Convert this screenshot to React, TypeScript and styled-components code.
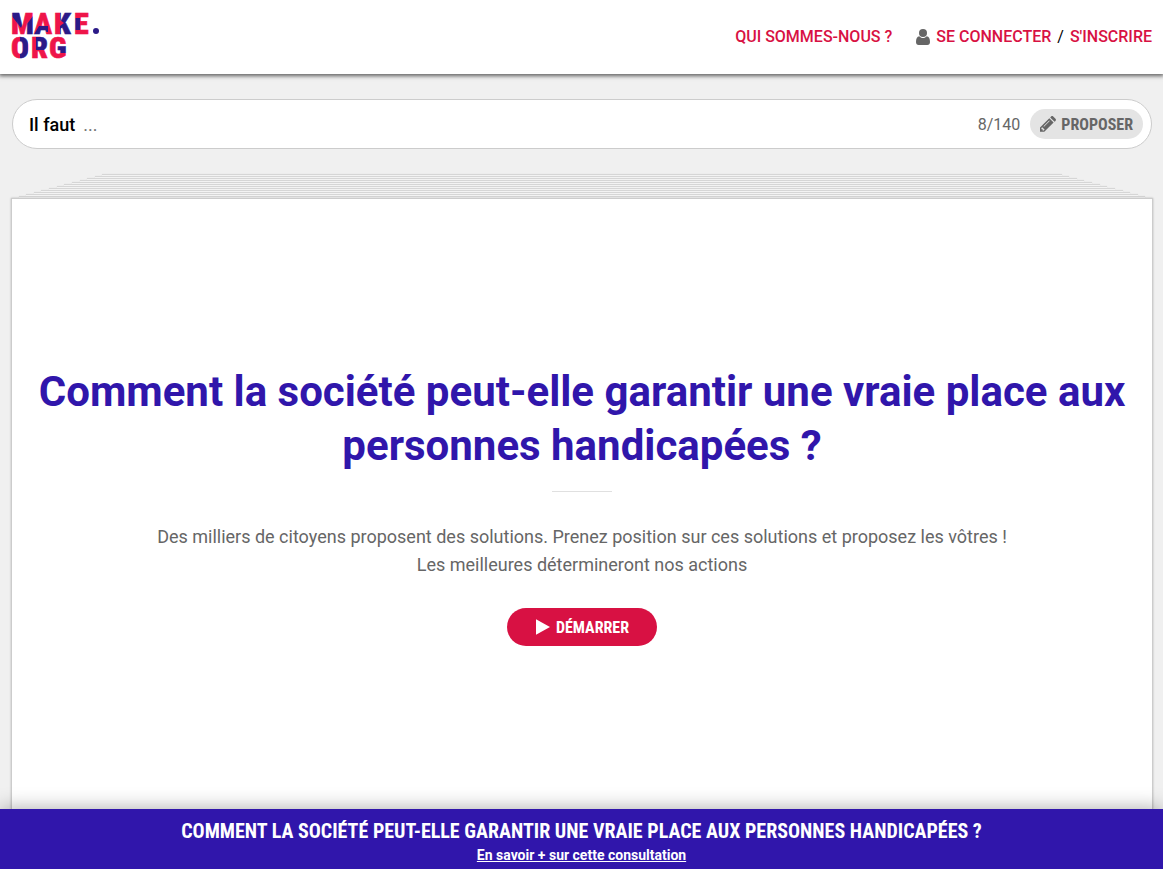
import React from "react";
import styled, { createGlobalStyle } from "styled-components";

const red = "#d81143";
const blue = "#3016ab";
const condensed = `"Roboto Condensed", Roboto, "Liberation Sans", sans-serif`;

const GlobalStyle = createGlobalStyle`
  *, *::before, *::after { box-sizing: border-box; }
  body {
    margin: 0;
    background: #f0f0f0;
    color: #000;
    font-family: Roboto, "Liberation Sans", sans-serif;
    font-size: 16px;
  }
`;

const Page = styled.div`
  display: flex;
  flex-direction: column;
  min-height: 100vh;
`;

const Header = styled.header`
  position: relative;
  display: flex;
  justify-content: space-between;
  align-items: center;
  padding: 12px 11px;
  background: #fff;
  box-shadow: 0 1px 4px 1px rgba(0, 0, 0, 0.6);
`;

const LogoLink = styled.a`
  display: block;
  height: 50px;
`;

const Nav = styled.nav`
  display: flex;
  align-items: center;
  gap: 24px;
  line-height: 24px;
`;

const NavLink = styled.a`
  color: ${red};
  font-weight: 500;
  text-decoration: none;
  text-transform: uppercase;
`;

const Account = styled.div`
  display: flex;
  align-items: center;
  gap: 6px;
`;

const Main = styled.main`
  flex: 1;
  display: flex;
  flex-direction: column;
  padding: 25px 10px 0 11px;
`;

const ProposalForm = styled.form`
  display: flex;
  align-items: center;
  height: 50px;
  margin: 0 1px 25px;
  padding: 0 8px 0 16px;
  border: 1px solid #ccc;
  border-radius: 25px;
  background: #fff;
`;

const ProposalLabel = styled.label`
  font-size: 18px;
  font-weight: 500;
`;

const ProposalInput = styled.input`
  flex: 1;
  min-width: 0;
  padding: 0 8px;
  border: 0;
  outline: 0;
  background: transparent;
  font-family: inherit;
  font-size: 18px;
  &::placeholder { color: #757575; opacity: 1; }
`;

const Counter = styled.span`
  margin-right: 10px;
  color: #666;
`;

const Button = styled.button<{ $primary?: boolean }>`
  display: flex;
  align-items: center;
  justify-content: center;
  gap: ${(p) => (p.$primary ? 6 : 4)}px;
  height: ${(p) => (p.$primary ? 38 : 30)}px;
  padding: 0 ${(p) => (p.$primary ? 28 : 10)}px;
  border: 0;
  border-radius: 19px;
  background: ${(p) => (p.$primary ? red : "#e4e4e4")};
  color: ${(p) => (p.$primary ? "#fff" : "#666")};
  font-family: ${condensed};
  font-size: 16px;
  font-weight: 700;
  text-transform: uppercase;
`;

const Pile = styled.div`
  display: flex;
  flex-direction: column;
  align-items: center;
`;

const Sheet = styled.div<{ $depth: number }>`
  width: calc(100% - ${(p) => p.$depth} * 4% / 3);
  height: 2px;
  border-top: 1px solid #d6d6d6;
  background: #f6f6f6;
  box-shadow: 0 0 1px rgba(0, 0, 0, 0.15);
`;

const Card = styled.section`
  flex: 1;
  display: flex;
  flex-direction: column;
  align-items: center;
  justify-content: center;
  padding: 27px 24px 24px;
  border: 1px solid #ccc;
  border-bottom: 0;
  background: #fff;
  box-shadow: 0 0 2px rgba(0, 0, 0, 0.25);
  text-align: center;
`;

const Title = styled.h1`
  margin: 0;
  color: ${blue};
  font-size: 42px;
  line-height: 54px;
  font-weight: 700;
`;

const Rule = styled.hr`
  width: 60px;
  height: 1px;
  margin: 18px 0 31px;
  border: 0;
  background: #e0e0e0;
`;

const Intro = styled.p`
  margin: 0 0 29px;
  color: #666;
  font-size: 18px;
  line-height: 28px;
`;

const Line = styled.span`
  display: block;
`;

const Banner = styled.footer`
  position: relative;
  display: flex;
  flex-direction: column;
  align-items: center;
  padding: 9px 12px 3px;
  background: ${blue};
  color: #fff;
  text-align: center;
  box-shadow: 0 0 20px rgba(0, 0, 0, 0.35);
`;

const BannerTitle = styled.h2`
  margin: 0;
  font-family: ${condensed};
  font-size: 20px;
  line-height: 26px;
  font-weight: 700;
  text-transform: uppercase;
`;

const BannerLink = styled.a`
  color: #fff;
  font-size: 14px;
  line-height: 22px;
  font-weight: 700;
`;

const LogoSvg = styled.svg`
  display: block;
  overflow: visible;
`;

const LogoText = styled.text`
  font-family: ${condensed};
  font-size: 30px;
  font-weight: 900;
  stroke-width: 0.5px;
`;

const Logo = () => (
  <LogoSvg width="90" height="50" viewBox="0 0 90 50" role="img" aria-label="Make.org">
    <defs>
      <pattern id="facets" patternUnits="userSpaceOnUse" width="90" height="50">
        <rect width="90" height="50" fill="#ee1549" />
        <g fill="#2b1a87">
          <path d="M0 0H8L12 11L10 16L0 3ZM22 4V24H16V12Z" />
          <path d="M28 14H37V20H30L29 24H22ZM49 14L53 11L49 8V0H62V24H49Z" />
          <path d="M63 6H69V18H63ZM9 25H17V49H9ZM25 25H37V38H25ZM46 34H58V41H46Z" />
        </g>
      </pattern>
    </defs>
    <g fill="url(#facets)" stroke="url(#facets)">
      <LogoText x="0 23 43 63" y="22">MAKE</LogoText>
      <LogoText x="0 20 38" y="46">ORG</LogoText>
    </g>
    <circle cx="85" cy="19" r="3" fill="#2b1a87" />
  </LogoSvg>
);

const UserIcon = () => (
  <svg width="14" height="16" viewBox="0 0 14 16" fill="#666" aria-hidden="true">
    <circle cx="7" cy="4" r="4" />
    <path d="M3.3 7.2C1 7.5 0 9.7 0 13c0 1.900 1 3 2.700 3h8.600c1.700 0 2.700-1.100 2.700-3 0-3.300-1-5.500-3.300-5.800C9.700 8.300 8.500 9 7 9s-2.700-.7-3.700-1.800Z" />
  </svg>
);

const PencilIcon = () => (
  <svg width="17" height="16" viewBox="0 0 17 16" fill="#666" aria-hidden="true">
    <path
      fillRule="evenodd"
      d="M0 11.500 9.300 2.200l4.300 4.300L4.300 15.800H0ZM1.400 12v1.200h1.200v1.200h1.200l.8-.8L2.200 11.200ZM3.500 10.200l.5.500 5.700-5.700-.5-.5Z"
    />
    <path d="m10.200 1.400.9-.9c.6-.6 1.500-.6 2.100 0l2.300 2.300c.6.6.6 1.500 0 2.100l-.9.9Z" />
  </svg>
);

const PlayIcon = () => (
  <svg width="15" height="16" viewBox="0 0 15 16" fill="#fff" aria-hidden="true">
    <path d="M1 .2v15.600L15 8Z" />
  </svg>
);

const sheets = [12, 11, 10, 9, 8, 7, 6, 5, 4, 3, 2, 1];

export default function App() {
  return (
    <>
      <GlobalStyle />
      <Page>
        <Header>
          <LogoLink href="#">
            <Logo />
          </LogoLink>
          <Nav>
            <NavLink href="#about">Qui sommes-nous ?</NavLink>
            <Account>
              <UserIcon />
              <NavLink href="#login">Se connecter</NavLink>
              <span>/</span>
              <NavLink href="#register">S'inscrire</NavLink>
            </Account>
          </Nav>
        </Header>
        <Main>
          <ProposalForm onSubmit={(e) => e.preventDefault()}>
            <ProposalLabel htmlFor="proposal">Il faut</ProposalLabel>
            <ProposalInput id="proposal" type="text" placeholder="..." />
            <Counter>8/140</Counter>
            <Button type="submit">
              <PencilIcon />
              Proposer
            </Button>
          </ProposalForm>
          <Pile aria-hidden="true">
            {sheets.map((depth) => (
              <Sheet key={depth} $depth={depth} />
            ))}
          </Pile>
          <Card>
            <Title>Comment la société peut-elle garantir une vraie place aux personnes handicapées ?</Title>
            <Rule />
            <Intro>
              <Line>Des milliers de citoyens proposent des solutions. Prenez position sur ces solutions et proposez les vôtres !</Line>
              <Line>Les meilleures détermineront nos actions</Line>
            </Intro>
            <Button type="button" $primary>
              <PlayIcon />
              Démarrer
            </Button>
          </Card>
        </Main>
        <Banner>
          <BannerTitle>Comment la société peut-elle garantir une vraie place aux personnes handicapées ?</BannerTitle>
          <BannerLink href="#more">En savoir + sur cette consultation</BannerLink>
        </Banner>
      </Page>
    </>
  );
}
